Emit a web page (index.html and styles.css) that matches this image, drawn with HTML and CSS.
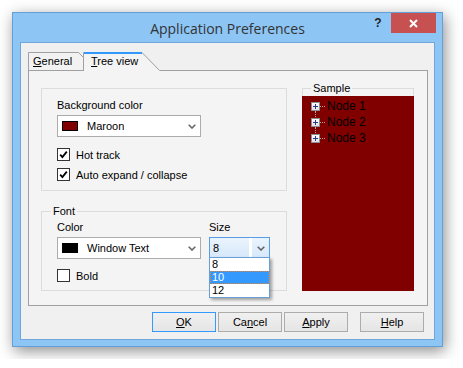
FILE: index.html
```html
<!DOCTYPE html>
<html lang="en">
<head>
    <meta charset="UTF-8">
    <title>Application Preferences</title>
    <link rel="stylesheet" href="styles.css">
</head>
<body>
    <div class="window">
        <div class="titlebar">
            <span></span>
            <span class="title">Application Preferences</span>
            <div class="caption-btns">
                <span class="help-btn">?</span>
                <span class="close-btn">
                    <svg width="9" height="9" viewBox="0 0 9 9"><path d="M1,1 L8,8 M8,1 L1,8" stroke="#fff" stroke-width="2"/></svg>
                </span>
            </div>
        </div>

        <div class="client">
            <div class="tabs">
                <div class="tab tab-general">
                    <svg width="56" height="18" viewBox="0 0 56 18"><path d="M0.5,18 V0.5 H50.5 L55.5,5.5 V18" fill="#F2F2F2" stroke="#A0A0A0"/></svg>
                    <span><u>G</u>eneral</span>
                </div>
                <div class="tab tab-tree">
                    <svg width="77" height="19" viewBox="0 0 77 19">
                        <polygon points="0,0 59,0 77,19 0,19" fill="#F4F4F4"/>
                        <path d="M0.5,19 V0.5 H59 L76.5,18.5" fill="none" stroke="#A0A0A0"/>
                        <rect x="1" y="0" width="58" height="2" fill="#3399FF"/>
                    </svg>
                    <span><u>T</u>ree view</span>
                </div>
            </div>

            <div class="panel">
                <div class="left-col">
                    <div class="group group-bg">
                        <div class="label">Background color</div>
                        <div class="combo">
                            <span class="swatch swatch-maroon"></span>
                            <span class="combo-text">Maroon</span>
                            <svg class="chevron" width="8" height="5" viewBox="0 0 8 5"><path d="M0.7,0.7 L4,4 L7.3,0.7" fill="none" stroke="#666" stroke-width="1.6"/></svg>
                        </div>
                        <div class="check check-first">
                            <span class="box"><svg width="9" height="9" viewBox="0 0 9 9"><path d="M1.2,4.6 L3.4,7 L7.8,1.6" fill="none" stroke="#000" stroke-width="1.8"/></svg></span>
                            <span>Hot track</span>
                        </div>
                        <div class="check">
                            <span class="box"><svg width="9" height="9" viewBox="0 0 9 9"><path d="M1.2,4.6 L3.4,7 L7.8,1.6" fill="none" stroke="#000" stroke-width="1.8"/></svg></span>
                            <span>Auto expand / collapse</span>
                        </div>
                    </div>

                    <fieldset class="group group-font">
                        <legend>Font</legend>
                        <div class="group-body">
                            <div class="font-grid">
                                <div class="label">Color</div>
                                <div class="label">Size</div>
                                <div class="combo">
                                    <span class="swatch swatch-black"></span>
                                    <span class="combo-text">Window Text</span>
                                    <svg class="chevron" width="8" height="5" viewBox="0 0 8 5"><path d="M0.7,0.7 L4,4 L7.3,0.7" fill="none" stroke="#666" stroke-width="1.6"/></svg>
                                </div>
                                <div class="combo size-combo">
                                    <span class="size-text">8</span>
                                    <span class="divider"></span>
                                    <span class="drop-btn">
                                        <svg width="8" height="5" viewBox="0 0 8 5"><path d="M0.7,0.7 L4,4 L7.3,0.7" fill="none" stroke="#666" stroke-width="1.6"/></svg>
                                    </span>
                                    <div class="size-list">
                                        <div class="size-item">8</div>
                                        <div class="size-item selected">10</div>
                                        <div class="size-item">12</div>
                                    </div>
                                </div>
                            </div>
                            <div class="check check-bold">
                                <span class="box"></span>
                                <span>Bold</span>
                            </div>
                        </div>
                    </fieldset>
                </div>

                <fieldset class="group group-sample">
                    <legend>Sample</legend>
                    <div class="tree">
                        <div class="node">
                            <span class="expander"><svg width="7" height="7" viewBox="0 0 7 7"><path d="M1,3.5 H6 M3.5,1 V6" stroke="#22399A" stroke-width="1"/></svg></span>
                            <span class="dots"></span>
                            <span class="node-text">Node 1</span>
                        </div>
                        <div class="node">
                            <span class="expander"><svg width="7" height="7" viewBox="0 0 7 7"><path d="M1,3.5 H6 M3.5,1 V6" stroke="#22399A" stroke-width="1"/></svg></span>
                            <span class="dots"></span>
                            <span class="node-text">Node 2</span>
                        </div>
                        <div class="node">
                            <span class="expander"><svg width="7" height="7" viewBox="0 0 7 7"><path d="M1,3.5 H6 M3.5,1 V6" stroke="#22399A" stroke-width="1"/></svg></span>
                            <span class="dots"></span>
                            <span class="node-text">Node 3</span>
                        </div>
                    </div>
                </fieldset>
            </div>

            <div class="buttons">
                <span class="btn btn-default"><u>O</u>K</span>
                <span class="btn">Ca<u>n</u>cel</span>
                <span class="btn"><u>A</u>pply</span>
                <span class="btn btn-help"><u>H</u>elp</span>
            </div>
        </div>
    </div>
</body>
</html>
```

FILE: styles.css
```css
body {
    margin: 0;
    padding: 12px;
    background: #fff;
    font-family: "Liberation Sans", Arial, sans-serif;
    font-size: 11px;
    color: #000;
}

.window {
    width: 431px;
    height: 335px;
    box-sizing: border-box;
    border: 1px solid #64A0D8;
    background: #8DC5F5;
    box-shadow: 2px 4px 14px rgba(0,0,0,0.45);
    display: flex;
    flex-direction: column;
}

.titlebar {
    height: 29px;
    flex: none;
    display: grid;
    grid-template-columns: 1fr auto 1fr;
}

.title {
    align-self: center;
    font-family: "Open Sans", sans-serif;
    font-size: 14px;
    color: #333;
    padding-top: 1px;
}

.caption-btns {
    justify-self: end;
    display: flex;
    height: 20px;
    margin-right: 6px;
}

.help-btn {
    width: 26px;
    display: flex;
    align-items: center;
    justify-content: center;
    font-weight: bold;
    font-size: 12px;
    color: #222;
}

.close-btn {
    width: 45px;
    background: #C75050;
    display: flex;
    align-items: center;
    justify-content: center;
}

.client {
    margin: 0 7px;
    height: 298px;
    box-sizing: border-box;
    border: 1px solid #72A6DA;
    background: #F0F0F0;
    padding: 9px 10px 0 7px;
}

/* tabs */
.tabs {
    display: flex;
    height: 18px;
}

.tab {
    position: relative;
    z-index: 1;
    box-sizing: border-box;
    height: 18px;
    line-height: 18px;
}

.tab svg {
    position: absolute;
    left: 0;
    top: 0;
}

.tab span {
    position: relative;
}

.tab-general {
    width: 56px;
    padding-left: 5px;
}

.tab-tree {
    width: 77px;
    height: 19px;
    margin-left: -1px;
    padding-left: 8px;
}

.panel {
    width: 400px;
    height: 236px;
    box-sizing: border-box;
    border: 1px solid #A0A0A0;
    background: #F4F4F4;
    display: grid;
    grid-template-columns: 246px 112px;
    column-gap: 15px;
    align-items: start;
    padding: 11px 0 0 12px;
}

/* group boxes */
.group {
    border: 1px solid #DCDCDC;
    margin: 0;
    padding: 0;
    min-width: 0;
}

.group legend {
    line-height: 13px;
    padding: 0 2px;
    margin-left: 9px;
}

.group-bg {
    margin-top: 6px;
    padding: 10px 15px 9px;
}

.group-bg .combo {
    width: 144px;
}

.label {
    height: 13px;
    line-height: 13px;
}

.group-bg .label {
    margin-bottom: 3px;
}

.combo {
    height: 22px;
    box-sizing: border-box;
    border: 1px solid #ACACAC;
    background: #fff;
    display: flex;
    align-items: center;
    padding: 0 4px 0 4px;
}

.swatch {
    width: 16px;
    height: 10px;
    box-sizing: border-box;
    border: 1px solid #000;
}

.swatch-maroon {
    background: #800000;
}

.swatch-black {
    background: #000;
}

.combo-text {
    margin-left: 9px;
}

.chevron {
    margin-left: auto;
}

.check {
    display: flex;
    align-items: center;
    gap: 6px;
    height: 13px;
    margin-top: 7px;
}

.check-first {
    margin-top: 11px;
}

.box {
    width: 13px;
    height: 13px;
    box-sizing: border-box;
    border: 1px solid #333;
    background: #fff;
    display: flex;
    align-items: center;
    justify-content: center;
}

.group-font {
    margin-top: 14px;
}

.group-body {
    padding: 3px 15px 8px;
}

.font-grid {
    display: grid;
    grid-template-columns: 144px 61px;
    column-gap: 8px;
    row-gap: 3px;
}

.check-bold {
    margin-top: 10px;
}

.size-combo {
    position: relative;
    padding: 0;
    border-color: #569DE5;
    background: linear-gradient(#EBF4FD, #D5E8FB);
}

.size-text {
    flex: 1;
    padding-left: 3px;
}

.divider {
    width: 3px;
    align-self: stretch;
    background: #fff;
}

.drop-btn {
    width: 17px;
    display: flex;
    align-items: center;
    justify-content: center;
}

.size-list {
    position: absolute;
    left: -1px;
    top: 19px;
    width: 61px;
    box-sizing: border-box;
    border: 1px solid #6A9ED6;
    background: #fff;
    box-shadow: 2px 2px 3px rgba(0,0,0,0.35);
    z-index: 2;
}

.size-item {
    height: 13px;
    line-height: 13px;
    padding-left: 2px;
}

.size-item.selected {
    box-sizing: border-box;
    background: #3399FF;
    color: #fff;
    border: 1px dotted #E8822A;
    line-height: 11px;
    padding-left: 1px;
}

/* sample tree */
.group-sample legend {
    margin-left: 8px;
}

.tree {
    height: 195px;
    margin: 1px -1px -1px;
    background: #800000;
    color: #000;
    padding: 2px 0 0 9px;
    box-sizing: border-box;
}

.node {
    display: flex;
    align-items: center;
    height: 16px;
}

.node-text {
    color: #000;
    font-size: 12px;
}

.expander {
    position: relative;
    width: 9px;
    height: 9px;
    box-sizing: border-box;
    border: 1px solid #8F8F8F;
    background: linear-gradient(#fff, #E2E2E2);
    display: flex;
    align-items: center;
    justify-content: center;
}

.node:not(:last-child) .expander::after {
    content: "";
    position: absolute;
    left: 3px;
    top: 8px;
    height: 8px;
    border-left: 1px dotted #A8A8A8;
}

.dots {
    width: 5px;
    border-top: 1px dotted #A8A8A8;
    margin-right: 2px;
}

/* dialog buttons */
.buttons {
    display: flex;
    justify-content: flex-end;
    gap: 2px;
    margin-top: 6px;
}

.btn {
    width: 64px;
    height: 20px;
    box-sizing: border-box;
    border: 1px solid #ACACAC;
    background: linear-gradient(#F0F0F0, #E5E5E5);
    text-align: center;
    line-height: 18px;
}

.btn-default {
    border-color: #3399FF;
}

.btn-help {
    margin-left: 10px;
}
```
